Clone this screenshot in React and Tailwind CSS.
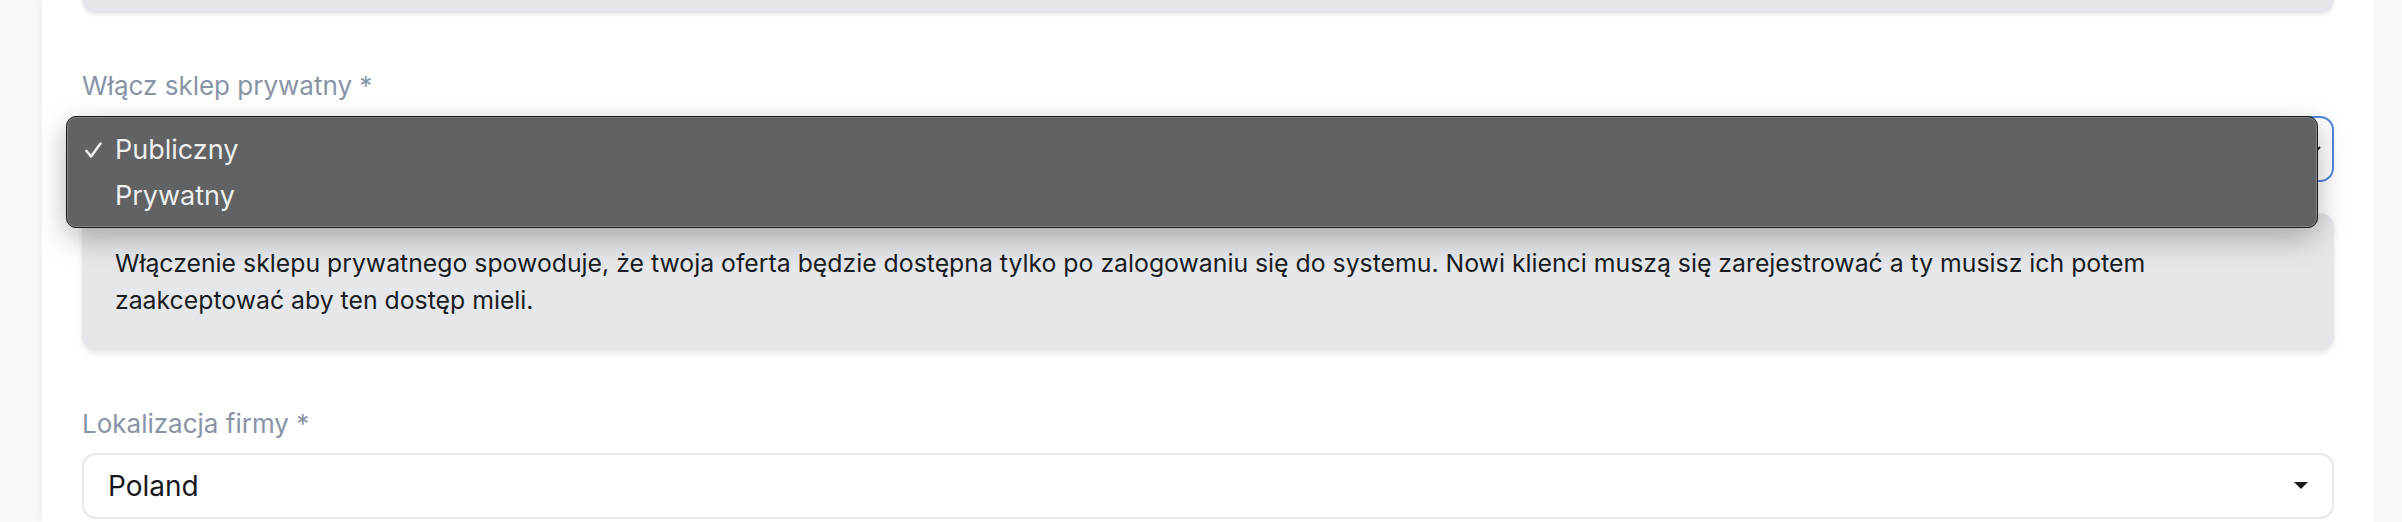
import React from "react";

export default function App() {
  return (
    <div className="w-full h-[522px] overflow-hidden bg-[#f7f8fb] font-['Inter','Noto_Sans',sans-serif]">
      <div className="ml-[42px] w-[2332px] h-[522px] bg-white shadow-[-2px_0_6px_rgba(0,0,0,0.04)] px-[40px]">
        {/* top partial info box */}
        <div className="h-[13px] rounded-b-[14px] bg-[#e5e7eb] shadow-[0_2px_4px_rgba(0,0,0,0.08)]" />

        {/* field 1 */}
        <div className="mt-[57px] text-[26px] leading-[32px] text-[#8794a6]">Włącz sklep prywatny *</div>
        <div className="relative mt-[14px] h-[66px] rounded-[14px] border-2 border-[#4f86dc] bg-white">
          <svg className="absolute right-[8px] top-[22px]" width="20" height="20" viewBox="0 0 20 20">
            <path d="M4 7 L10 13 L16 7" fill="none" stroke="#222" strokeWidth="2" />
          </svg>
          {/* native-like dropdown overlay */}
          <div className="absolute left-[-18px] top-[-2px] z-10 w-[2252px] h-[112px] rounded-[10px] border border-[#1c1c1c] bg-[#606264] shadow-[inset_0_0_0_1px_rgba(255,255,255,0.22),0_10px_30px_rgba(0,0,0,0.28)] pt-[10px]">
            <div className="flex items-center h-[46px] text-[27px] leading-[46px] text-[#efefef]">
              <span className="w-[48px] pl-[18px] flex items-center">
                <svg width="17" height="17" viewBox="0 0 17 17">
                  <path d="M1.5 9 L6 14.5 L15.5 1.5" fill="none" stroke="#efefef" strokeWidth="2.6" strokeLinecap="round" strokeLinejoin="round" />
                </svg>
              </span>
              <span>Publiczny</span>
            </div>
            <div className="flex items-center h-[46px] text-[27px] leading-[46px] text-[#efefef]">
              <span className="w-[48px]" />
              <span>Prywatny</span>
            </div>
          </div>
        </div>

        {/* info box */}
        <div className="mt-[31px] rounded-[14px] bg-[#e5e7eb] shadow-[0_3px_6px_rgba(0,0,0,0.09)] px-[33px] py-[32px] text-[24.8px] leading-[37px] text-[#1a1d21]">
          Włączenie sklepu prywatnego spowoduje, że twoja oferta będzie dostępna tylko po zalogowaniu się do systemu. Nowi klienci muszą się zarejestrować a ty musisz ich potem
          <br />
          zaakceptować aby ten dostęp mieli.
        </div>

        {/* field 2 */}
        <div className="mt-[57px] text-[26px] leading-[32px] text-[#8794a6]">Lokalizacja firmy *</div>
        <div className="mt-[13px] h-[66px] rounded-[14px] border-2 border-[#e5e7eb] bg-white flex items-center justify-between pl-[24px] pr-[24px]">
          <span className="text-[28px] text-[#16181b]">Poland</span>
          <svg width="14" height="8" viewBox="0 0 14 8">
            <path d="M0 0 L14 0 L7 7 Z" fill="#1b1b1b" />
          </svg>
        </div>
      </div>
    </div>
  );
}
